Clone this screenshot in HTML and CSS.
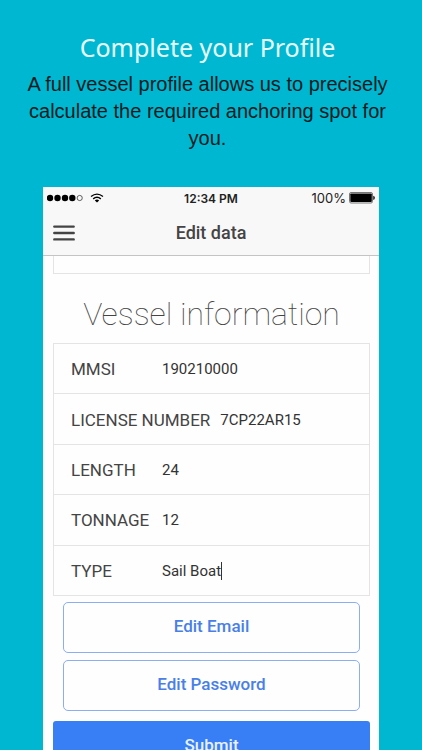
FILE: index.html
```html
<!DOCTYPE html>
<html lang="en">
<head>
<meta charset="utf-8">
<meta name="viewport" content="width=device-width, initial-scale=1">
<title>Complete your Profile</title>
<link rel="stylesheet" href="styles.css">
</head>
<body>
<header class="intro">
  <h1>Complete your Profile</h1>
  <p>A full vessel profile allows us to precisely calculate the required anchoring spot for you.</p>
</header>
<main class="phone">
  <div class="topbar">
    <div class="status">
      <div class="signal">
        <svg width="36" height="8" viewBox="0 0 36 8" aria-hidden="true">
          <circle cx="3" cy="4" r="3.2"/><circle cx="10.5" cy="4" r="3.2"/><circle cx="18" cy="4" r="3.2"/><circle cx="25.3" cy="4" r="3.2"/>
          <circle cx="32.7" cy="4" r="2.6" fill="none" stroke="#222" stroke-width=".7"/>
        </svg>
        <svg width="14" height="10" viewBox="0 0 14 10" fill="none" stroke="#000" aria-hidden="true">
          <path d="M1 3.6Q7-1.4 13 3.6" stroke-width="1.3"/>
          <path d="M3.2 5.9Q7 2.7 10.8 5.9" stroke-width="1.4"/>
          <path d="M4.8 7.4Q7 5.6 9.2 7.4L7 9.6Z" fill="#000" stroke="none"/>
        </svg>
      </div>
      <span class="time">12:34 PM</span>
      <div class="power">
        <span>100%</span>
        <svg width="26" height="12" viewBox="0 0 26 12" aria-hidden="true">
          <rect x=".5" y=".5" width="23" height="10.5" rx="1.5" fill="none" stroke="#777"/>
          <rect x="1.3" y="1.5" width="21.5" height="8.6" rx=".8"/>
          <path d="M24.3 3.7Q25.8 4 25.8 5.8T24.3 7.9Z"/>
        </svg>
      </div>
    </div>
    <nav class="nav">
      <button class="menu" type="button" aria-label="Menu">
        <svg width="22" height="16" viewBox="0 0 22 16" stroke="#444" stroke-width="2.4" stroke-linecap="round" aria-hidden="true">
          <path d="M1.3 1.6H20.7M1.3 8H20.7M1.3 14.4H20.7"/>
        </svg>
      </button>
      <h2>Edit data</h2>
    </nav>
  </div>
  <form class="content">
    <div class="previous"></div>
    <h3>Vessel information</h3>
    <div class="list">
      <div class="row"><label for="mmsi">MMSI</label><input id="mmsi" type="text" value="190210000"></div>
      <div class="row"><label for="license">LICENSE NUMBER</label><input id="license" type="text" value="7CP22AR15"></div>
      <div class="row"><label for="length">LENGTH</label><input id="length" type="text" value="24"></div>
      <div class="row"><label for="tonnage">TONNAGE</label><input id="tonnage" type="text" value="12"></div>
      <div class="row active"><label for="type">TYPE</label><input id="type" type="text" value="Sail Boat"><span class="caret"></span></div>
    </div>
    <div class="edits">
      <button class="outline" type="button">Edit Email</button>
      <button class="outline" type="button">Edit Password</button>
    </div>
    <button class="submit" type="submit">Submit</button>
  </form>
</main>
</body>
</html>
```

FILE: styles.css
```css
* { box-sizing: border-box; }

body {
  margin: 0;
  height: 100vh;
  overflow: hidden;
  display: flex;
  flex-direction: column;
  background: #00b7d2;
  font-family: Roboto, sans-serif;
  color: #444;
}

h1, h2, h3, p { margin: 0; }

.intro {
  padding: 29px 24px 35px 17px;
  text-align: center;
  color: #081b20;
}

.intro h1 {
  font: 400 25px/36px "Noto Sans", sans-serif;
  color: #e9ffff;
}

.intro p {
  margin-top: 6px;
  font: 20px/27px "Liberation Sans", sans-serif;
}

.phone {
  flex: 1;
  min-height: 0;
  margin: 0 43px;
  overflow: hidden;
  background: #fefefe;
}

.topbar {
  background: #f8f8f8;
  border-bottom: 1px solid #c4c4c4;
}

.status {
  display: grid;
  grid-template-columns: 1fr auto 1fr;
  align-items: center;
  height: 23px;
  padding: 0 4px;
  color: #222;
}

.signal, .power {
  display: flex;
  align-items: center;
}

.signal { gap: 7px; padding-bottom: 2px; }

.power {
  justify-content: flex-end;
  gap: 3px;
  padding-bottom: 2px;
  font: 13px/20px Inter, sans-serif;
}

.time { font: 600 12px/24px Inter, sans-serif; }

.nav {
  display: grid;
  grid-template-columns: 40px 1fr 40px;
  align-items: center;
  height: 45px;
}

.menu {
  display: flex;
  padding: 0 0 0 10px;
  border: 0;
  background: none;
}

.nav h2 {
  text-align: center;
  font-size: 18px;
  font-weight: 500;
  line-height: 24px;
}

.content {
  display: flex;
  flex-direction: column;
  padding: 0 9px 0 10px;
}

.previous {
  height: 18px;
  border: 1px solid #e4e4e4;
  border-top: 0;
}

.content h3 {
  padding: 20px 0 9px;
  text-align: center;
  font-size: 32px;
  font-weight: 100;
  line-height: 40px;
}

.list {
  display: flex;
  flex-direction: column;
  min-height: 253px;
  border: 1px solid #e4e4e4;
}

.row {
  flex: 1;
  display: flex;
  align-items: center;
  gap: 10px;
  padding: 1px 17px 0;
}

.row + .row { border-top: 1px solid #e4e4e4; }

.row label {
  flex: none;
  min-width: 81px;
  font-size: 17px;
  line-height: 24px;
}

.row input {
  flex: 1;
  min-width: 0;
  padding: 0;
  border: 0;
  outline: 0;
  background: none;
  color: #333;
  font: 15px/24px Roboto, sans-serif;
}

.active { gap: 0; }
.active label { min-width: 91px; }
.active input { flex: none; field-sizing: content; }

.caret {
  width: 1px;
  height: 18px;
  background: #333;
}

.edits {
  display: flex;
  flex-direction: column;
  gap: 7px;
  padding: 6px 10px 10px;
}

.outline, .submit {
  height: 51px;
  padding: 0 0 4px;
  font: 500 17px/24px Roboto, sans-serif;
}

.outline {
  border: 1px solid #8baef2;
  border-radius: 5px;
  background: none;
  color: #4880e8;
}

.submit {
  border: 0;
  border-radius: 3px;
  background: #387ef5;
  color: #e8f1ff;
}
```
